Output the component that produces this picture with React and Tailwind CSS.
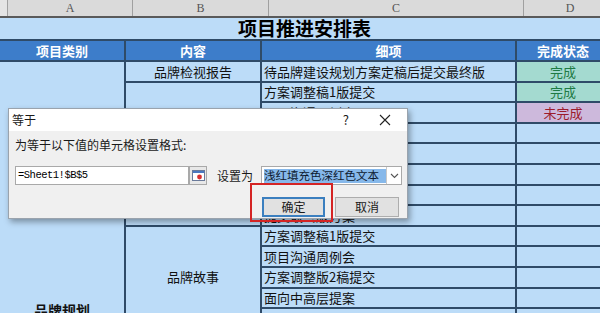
import React from "react";

const cRows = [
  "待品牌建设规划方案定稿后提交最终版",
  "方案调整稿1版提交",
  "项目沟通周例会",
  "",
  "",
  "",
  "",
  "提交最终版方案",
  "方案调整稿1版提交",
  "项目沟通周例会",
  "方案调整版2稿提交",
  "面向中高层提案",
  "方案调整稿3版提交",
];

const dRows = ["完成", "完成", "未完成", "", "", "", "", "", "", "", "", "", ""];

function DCell({ v }) {
  if (v === "完成")
    return (
      <div className="bg-[#a4dad0] flex items-center justify-center text-[13px] text-[#1f7a45]">
        {v}
      </div>
    );
  if (v === "未完成")
    return (
      <div className="bg-[#cdb9dc] flex items-center justify-center text-[13px] text-[#9c1b2c]">
        {v}
      </div>
    );
  return <div className="bg-[#bcdcf8]" />;
}

export default function App() {
  return (
    <div className="relative w-[600px] h-[313px] overflow-hidden bg-white font-['Noto_Sans_CJK_SC',sans-serif]">
      {/* column header */}
      <div className="flex h-[18px] w-[620px] bg-[#dadada] border-b-[2px] border-[#5a5a5a] font-['Liberation_Serif',serif] text-[12px] text-[#555]">
        <div className="w-[8px] border-r border-[#a0a0a0] bg-[#e4e4e4]" />
        <div className="w-[125px] border-r border-[#a0a0a0] flex items-center justify-center">A</div>
        <div className="w-[136px] border-r border-[#a0a0a0] flex items-center justify-center">B</div>
        <div className="w-[255px] border-r border-[#a0a0a0] flex items-center justify-center">C</div>
        <div className="w-[92px] flex items-center justify-center">D</div>
      </div>
      <div className="flex">
        {/* row header */}
        <div className="w-[8px] flex flex-col bg-[#f1c443]">
          <div className="h-[23px] border-b-[2px] border-[#b99432]" />
          <div className="h-[21px] border-b-[2px] border-[#b99432]" />
          {cRows.map((_, i) => (
            <div key={i} className="h-[20.6px] border-b-[2px] border-[#b99432]" />
          ))}
        </div>
        {/* main grid */}
        <div className="grid grid-cols-[124px_134px_253px_92px] grid-rows-[21px_19px_repeat(13,18.6px)] gap-[2px] bg-[#2f4b68] text-[#111]">
          <div className="col-start-1 col-span-4 row-start-1 bg-[#bcdcf8] flex items-center pl-[238px] text-[19px] font-bold text-black">
            项目推进安排表
          </div>
          <div className="col-start-1 row-start-2 bg-[#3d7dca] flex items-center justify-center text-[13px] font-bold text-white">项目类别</div>
          <div className="col-start-2 row-start-2 bg-[#3d7dca] flex items-center justify-center text-[13px] font-bold text-white">内容</div>
          <div className="col-start-3 row-start-2 bg-[#3d7dca] flex items-center justify-center text-[13px] font-bold text-white">细项</div>
          <div className="col-start-4 row-start-2 bg-[#3d7dca] flex items-center justify-center text-[13px] font-bold text-white">完成状态</div>

          <div className="col-start-1 row-start-3 row-span-13 bg-[#bcdcf8] flex justify-center pt-[238px] text-[14px] font-bold">
            品牌规划
          </div>
          <div className="col-start-2 row-start-3 bg-[#bcdcf8] flex items-center justify-center text-[13px]">品牌检视报告</div>
          <div className="col-start-2 row-start-4 row-span-7 bg-[#bcdcf8]" />
          <div className="col-start-2 row-start-11 row-span-5 bg-[#bcdcf8] flex items-center justify-center text-[13px]">品牌故事</div>

          {cRows.map((t, i) => (
            <React.Fragment key={i}>
              <div className="bg-[#bcdcf8] flex items-center pl-[2px] text-[13px] whitespace-nowrap overflow-hidden">{t}</div>
              <DCell v={dRows[i]} />
            </React.Fragment>
          ))}
        </div>
      </div>

      {/* dialog */}
      <div className="absolute left-[8px] top-[108px] w-[400px] h-[111px] flex flex-col border border-[#9aa3ad] shadow-[2px_3px_6px_rgba(0,0,0,0.35)] bg-[#f0f0f0] text-[12px] text-[#1a1a1a]">
        <div className="h-[22px] shrink-0 bg-white flex items-center pl-[3px]">
          <span>等于</span>
          <span className="ml-auto mr-[30px] text-[13px]">?</span>
          <svg width="12" height="12" viewBox="0 0 12 12" className="mr-[16px]">
            <path d="M1 1 L11 11 M11 1 L1 11" stroke="#222" strokeWidth="1.1" />
          </svg>
        </div>
        <div className="flex-1 flex flex-col pl-[6px] pr-[8px]">
          <div className="mt-[6px] h-[16px] flex items-center whitespace-nowrap">为等于以下值的单元格设置格式:</div>
          <div className="mt-[13px] flex items-center h-[19px] whitespace-nowrap">
            <div className="w-[174px] shrink-0 h-[19px] bg-white border border-[#a9a9a9] flex items-center pl-[2px] font-['Liberation_Mono',monospace] text-[10.5px] tracking-[-0.5px] text-black">
              =Sheet1!$B$5
            </div>
            <div className="w-[18px] shrink-0 h-[19px] border border-[#a9a9a9] bg-[#e8e8e8] flex items-center justify-center">
              <svg width="13" height="11" viewBox="0 0 13 11">
                <rect x="0.5" y="0.5" width="12" height="10" fill="#fff" stroke="#6a7a9a" />
                <rect x="1" y="1" width="11" height="2" fill="#4a78c0" />
                <circle cx="7.5" cy="7" r="2.4" fill="#d83030" />
              </svg>
            </div>
            <span className="ml-[10px] shrink-0">设置为</span>
            <div className="ml-[8px] shrink-0 w-[141px] h-[19px] bg-white border border-[#a9a9a9] flex items-center">
              <div className="ml-[2px] w-[122px] h-[14px] bg-[#86b8ea] flex items-center text-[11.5px] text-[#0d1a30] whitespace-nowrap overflow-hidden">
                浅红填充色深红色文本
              </div>
              <div className="ml-auto w-[15px] h-full border-l border-[#c8c8c8] flex items-center justify-center">
                <svg width="9" height="6" viewBox="0 0 9 6">
                  <path d="M1 1 L4.5 4.5 L8 1" fill="none" stroke="#555" strokeWidth="1.1" />
                </svg>
              </div>
            </div>
          </div>
          <div className="mt-[12px] flex">
            <div className="ml-[247px] w-[64px] h-[20px] bg-[#e1e1e1] border-[2px] border-[#3b7fbf] flex items-center justify-center">确定</div>
            <div className="ml-[10px] w-[65px] h-[20px] bg-[#e1e1e1] border border-[#adadad] flex items-center justify-center">取消</div>
          </div>
        </div>
      </div>
      {/* red highlight box */}
      <div className="absolute left-[250px] top-[183px] w-[83px] h-[39px] border-[2px] border-[#d42424]" />
    </div>
  );
}
